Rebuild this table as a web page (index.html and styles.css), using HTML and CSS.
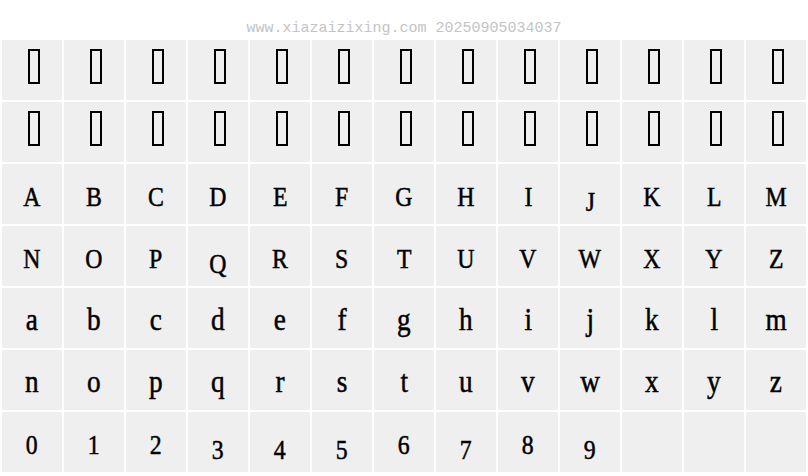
FILE: index.html
```html
<!DOCTYPE html>
<html>
<head>
<meta charset="utf-8">
<link rel="stylesheet" href="styles.css">
</head>
<body>
<div class="mark">www.xiazaizixing.com 20250905034037</div>
<div class="grid">
  <div class="cell"><span class="tofu"></span></div>
  <div class="cell"><span class="tofu"></span></div>
  <div class="cell"><span class="tofu"></span></div>
  <div class="cell"><span class="tofu"></span></div>
  <div class="cell"><span class="tofu"></span></div>
  <div class="cell"><span class="tofu"></span></div>
  <div class="cell"><span class="tofu"></span></div>
  <div class="cell"><span class="tofu"></span></div>
  <div class="cell"><span class="tofu"></span></div>
  <div class="cell"><span class="tofu"></span></div>
  <div class="cell"><span class="tofu"></span></div>
  <div class="cell"><span class="tofu"></span></div>
  <div class="cell"><span class="tofu"></span></div>

  <div class="cell"><span class="tofu"></span></div>
  <div class="cell"><span class="tofu"></span></div>
  <div class="cell"><span class="tofu"></span></div>
  <div class="cell"><span class="tofu"></span></div>
  <div class="cell"><span class="tofu"></span></div>
  <div class="cell"><span class="tofu"></span></div>
  <div class="cell"><span class="tofu"></span></div>
  <div class="cell"><span class="tofu"></span></div>
  <div class="cell"><span class="tofu"></span></div>
  <div class="cell"><span class="tofu"></span></div>
  <div class="cell"><span class="tofu"></span></div>
  <div class="cell"><span class="tofu"></span></div>
  <div class="cell"><span class="tofu"></span></div>

  <div class="cell"><span class="g">A</span></div>
  <div class="cell"><span class="g">B</span></div>
  <div class="cell"><span class="g">C</span></div>
  <div class="cell"><span class="g">D</span></div>
  <div class="cell"><span class="g">E</span></div>
  <div class="cell"><span class="g">F</span></div>
  <div class="cell"><span class="g">G</span></div>
  <div class="cell"><span class="g">H</span></div>
  <div class="cell"><span class="g">I</span></div>
  <div class="cell"><span class="g dn">J</span></div>
  <div class="cell"><span class="g">K</span></div>
  <div class="cell"><span class="g">L</span></div>
  <div class="cell"><span class="g">M</span></div>

  <div class="cell"><span class="g">N</span></div>
  <div class="cell"><span class="g">O</span></div>
  <div class="cell"><span class="g">P</span></div>
  <div class="cell"><span class="g dn">Q</span></div>
  <div class="cell"><span class="g">R</span></div>
  <div class="cell"><span class="g">S</span></div>
  <div class="cell"><span class="g">T</span></div>
  <div class="cell"><span class="g">U</span></div>
  <div class="cell"><span class="g">V</span></div>
  <div class="cell"><span class="g">W</span></div>
  <div class="cell"><span class="g">X</span></div>
  <div class="cell"><span class="g">Y</span></div>
  <div class="cell"><span class="g">Z</span></div>

  <div class="cell lc"><span class="g up">a</span></div>
  <div class="cell lc"><span class="g">b</span></div>
  <div class="cell lc"><span class="g up">c</span></div>
  <div class="cell lc"><span class="g">d</span></div>
  <div class="cell lc"><span class="g up">e</span></div>
  <div class="cell lc"><span class="g">f</span></div>
  <div class="cell lc"><span class="g">g</span></div>
  <div class="cell lc"><span class="g">h</span></div>
  <div class="cell lc"><span class="g up">i</span></div>
  <div class="cell lc"><span class="g">j</span></div>
  <div class="cell lc"><span class="g">k</span></div>
  <div class="cell lc"><span class="g">l</span></div>
  <div class="cell lc"><span class="g up">m</span></div>

  <div class="cell lc"><span class="g">n</span></div>
  <div class="cell lc"><span class="g">o</span></div>
  <div class="cell lc"><span class="g">p</span></div>
  <div class="cell lc"><span class="g">q</span></div>
  <div class="cell lc"><span class="g">r</span></div>
  <div class="cell lc"><span class="g">s</span></div>
  <div class="cell lc"><span class="g">t</span></div>
  <div class="cell lc"><span class="g">u</span></div>
  <div class="cell lc"><span class="g">v</span></div>
  <div class="cell lc"><span class="g">w</span></div>
  <div class="cell lc"><span class="g">x</span></div>
  <div class="cell lc"><span class="g">y</span></div>
  <div class="cell lc"><span class="g">z</span></div>

  <div class="cell"><span class="g">0</span></div>
  <div class="cell"><span class="g">1</span></div>
  <div class="cell"><span class="g">2</span></div>
  <div class="cell"><span class="g dn">3</span></div>
  <div class="cell"><span class="g dn">4</span></div>
  <div class="cell"><span class="g dn">5</span></div>
  <div class="cell"><span class="g">6</span></div>
  <div class="cell"><span class="g dn">7</span></div>
  <div class="cell"><span class="g">8</span></div>
  <div class="cell"><span class="g dn">9</span></div>
  <div class="cell"></div>
  <div class="cell"></div>
  <div class="cell"></div>
</div>
</body>
</html>
```

FILE: styles.css
```css
html, body {
  margin: 0;
  padding: 0;
  background: #ffffff;
}

.mark {
  box-sizing: border-box;
  height: 40px;
  padding-top: 20px;
  font-family: "Liberation Mono", monospace;
  font-size: 15px;
  line-height: 17px;
  color: #c4c4c4;
  text-align: center;
  white-space: nowrap;
}

.grid {
  display: grid;
  grid-template-columns: repeat(13, 60px);
  grid-auto-rows: 60px;
  gap: 2px;
  padding: 0 2px;
}

.cell {
  box-sizing: border-box;
  background: #efefef;
  padding-top: 6px;
  font-family: "Liberation Serif", serif;
  font-size: 27px;
  line-height: 54px;
  color: #000;
  text-align: center;
}

.cell.lc {
  font-size: 31px;
  padding-top: 5px;
}

.g {
  display: inline-block;
  -webkit-text-stroke: 0.5px #000;
  transform: scaleX(0.88);
}

.tofu {
  display: inline-block;
  box-sizing: border-box;
  width: 12px;
  height: 35px;
  border: 2px solid #000;
  margin-left: 3px;
  vertical-align: -2px;
}

.dn {
  vertical-align: -5px;
}

.up {
  vertical-align: 3px;
}
```
